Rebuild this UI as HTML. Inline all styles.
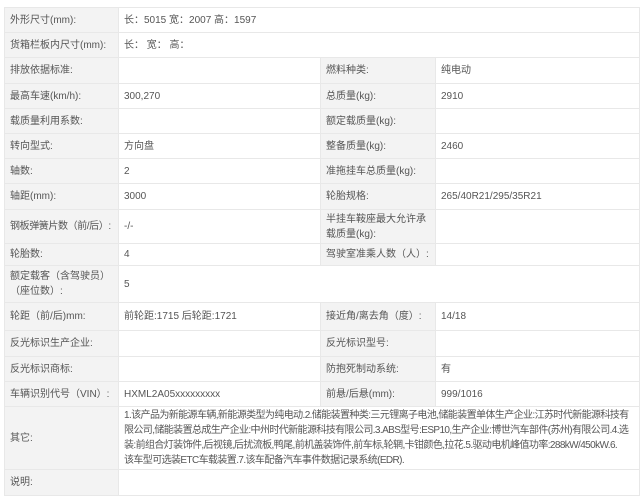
<!DOCTYPE html>
<html><head><meta charset="utf-8"><style>
body{margin:0;background:#fff;width:640px;height:492px;overflow:hidden;font-family:"Liberation Sans","Noto Sans CJK SC",sans-serif;font-size:10px;color:#555}
table{position:absolute;left:4px;top:7px;border-collapse:collapse;width:636px;table-layout:fixed}
td{border:1px solid #e8e8e8;padding:0 0 0 5px;vertical-align:middle;line-height:15px;white-space:normal}
td.l{background:#f3f3f3}
</style></head><body>
<table>
<colgroup><col style="width:114px"><col style="width:202px"><col style="width:115px"><col></colgroup>
<tr style="height:25px"><td class="l">外形尺寸(mm):</td><td colspan="3">长：5015 宽：2007 高：1597</td></tr>
<tr style="height:25px"><td class="l">货箱栏板内尺寸(mm):</td><td colspan="3">长： 宽： 高：</td></tr>
<tr style="height:26px"><td class="l">排放依据标准:</td><td></td><td class="l">燃料种类:</td><td>纯电动</td></tr>
<tr style="height:25px"><td class="l">最高车速(km/h):</td><td>300,270</td><td class="l">总质量(kg):</td><td>2910</td></tr>
<tr style="height:25px"><td class="l">载质量利用系数:</td><td></td><td class="l">额定载质量(kg):</td><td></td></tr>
<tr style="height:25px"><td class="l">转向型式:</td><td>方向盘</td><td class="l">整备质量(kg):</td><td>2460</td></tr>
<tr style="height:25px"><td class="l">轴数:</td><td>2</td><td class="l">准拖挂车总质量(kg):</td><td></td></tr>
<tr style="height:26px"><td class="l">轴距(mm):</td><td>3000</td><td class="l">轮胎规格:</td><td>265/40R21/295/35R21</td></tr>
<tr style="height:34px"><td class="l" style="letter-spacing:-0.4px">钢板弹簧片数（前/后）:</td><td>-/-</td><td class="l">半挂车鞍座最大允许承载质量(kg):</td><td></td></tr>
<tr style="height:22px"><td class="l">轮胎数:</td><td>4</td><td class="l">驾驶室准乘人数（人）:</td><td></td></tr>
<tr style="height:37px"><td class="l">额定载客（含驾驶员）（座位数）:</td><td colspan="3">5</td></tr>
<tr style="height:28px"><td class="l">轮距（前/后)mm:</td><td>前轮距:1715 后轮距:1721</td><td class="l">接近角/离去角（度）:</td><td>14/18</td></tr>
<tr style="height:26px"><td class="l">反光标识生产企业:</td><td></td><td class="l">反光标识型号:</td><td></td></tr>
<tr style="height:25px"><td class="l">反光标识商标:</td><td></td><td class="l">防抱死制动系统:</td><td>有</td></tr>
<tr style="height:25px"><td class="l">车辆识别代号（VIN）:</td><td>HXML2A05xxxxxxxxx</td><td class="l">前悬/后悬(mm):</td><td>999/1016</td></tr>
<tr style="height:63px"><td class="l">其它:</td><td colspan="3" style="white-space:nowrap;overflow:hidden;letter-spacing:-0.6px">1.该产品为新能源车辆,新能源类型为纯电动.2.储能装置种类:三元锂离子电池,储能装置单体生产企业:江苏时代新能源科技有<br>限公司,储能装置总成生产企业:中州时代新能源科技有限公司.3.ABS型号:ESP10,生产企业:博世汽车部件(苏州)有限公司.4.选<br>装:前组合灯装饰件,后视镜,后扰流板,鸭尾,前机盖装饰件,前车标,轮辋,卡钳颜色,拉花.5.驱动电机峰值功率:288kW/450kW.6.<br>该车型可选装ETC车载装置.7.该车配备汽车事件数据记录系统(EDR).</td></tr>
<tr style="height:26px"><td class="l">说明:</td><td colspan="3"></td></tr>
</table>
</body></html>
